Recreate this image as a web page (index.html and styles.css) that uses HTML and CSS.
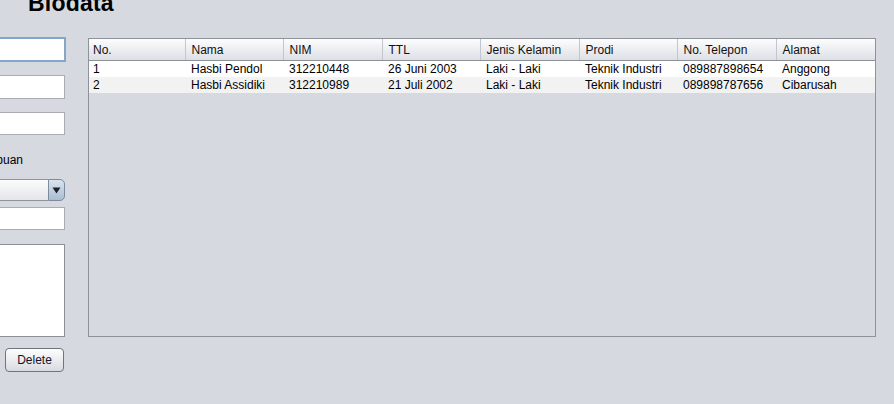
FILE: index.html
```html
<!DOCTYPE html>
<html>
<head>
<meta charset="utf-8">
<link rel="stylesheet" href="styles.css">
</head>
<body>
<h1 class="title">Biodata</h1>
<div class="app">
  <div class="form">
    <div class="field focused"></div>
    <div class="field f2"></div>
    <div class="field f3"></div>
    <div class="radio-label">Perempuan</div>
    <div class="combo"><div class="combo-main"></div><div class="combo-btn"><svg width="9" height="7" viewBox="0 0 9 7"><path d="M0.5 0.5 L8.5 0.5 L4.5 6.5 Z" fill="#1d2129"/></svg></div></div>
    <div class="field f4"></div>
    <div class="textarea"></div>
    <div class="btn-row"><button class="btn">Delete</button></div>
  </div>
  <div class="table-pane">
    <table class="grid">
      <colgroup>
        <col class="c1"><col class="c2"><col class="c3"><col class="c4"><col class="c5"><col class="c6"><col class="c7"><col class="c8">
      </colgroup>
      <thead>
        <tr><th>No.</th><th>Nama</th><th>NIM</th><th>TTL</th><th>Jenis Kelamin</th><th>Prodi</th><th>No. Telepon</th><th>Alamat</th></tr>
      </thead>
      <tbody>
        <tr><td>1</td><td>Hasbi Pendol</td><td>312210448</td><td>26 Juni 2003</td><td>Laki - Laki</td><td>Teknik Industri</td><td>089887898654</td><td>Anggong</td></tr>
        <tr class="alt"><td>2</td><td>Hasbi Assidiki</td><td>312210989</td><td>21 Juli 2002</td><td>Laki - Laki</td><td>Teknik Industri</td><td>089898787656</td><td>Cibarusah</td></tr>
      </tbody>
    </table>
  </div>
</div>
</body>
</html>
```
FILE: styles.css
```css
html, body {
  margin: 0;
  padding: 0;
  background: #d6d9df;
  overflow: hidden;
  width: 894px;
  height: 404px;
  font-family: "Liberation Sans", Arial, sans-serif;
  color: #000;
}
.title {
  margin: -10px 0 0 28px;
  height: 26px;
  font-size: 23px;
  line-height: 26px;
  font-weight: bold;
  letter-spacing: 0.2px;
}
.app {
  display: grid;
  grid-template-columns: 66px 788px;
  column-gap: 22px;
  margin-top: 21px;
}
.form {
  display: flex;
  flex-direction: column;
}
.field {
  background: #fff;
  border: 1px solid #a9acb2;
  border-left: none;
  height: 22px;
  margin-right: 1px;
}
.field.focused {
  height: 21px;
  border: 2px solid #84a6c9;
  border-left: none;
  margin-right: 0;
}
.f2 { margin-top: 13px; }
.f3 { margin-top: 13px; height: 21px; }
.radio-label {
  margin-top: 18px;
  margin-left: -39px;
  font-size: 12px;
  line-height: 14px;
  height: 14px;
}
.combo {
  margin-top: 12px;
  height: 22px;
  display: flex;
  margin-right: 1px;
}
.combo-main {
  flex: 1;
  border: 1px solid #8f949c;
  border-left: none;
  border-right: none;
  background: linear-gradient(#fbfbfc, #e3e6ea);
}
.combo-btn {
  width: 15px;
  border: 1px solid #7d8b9e;
  border-radius: 0 5px 5px 0;
  background: linear-gradient(#d9e3ee, #a9bdd3);
  display: flex;
  align-items: center;
  justify-content: center;
}
.f4 { margin-top: 6px; height: 21px; }
.textarea {
  margin-top: 14px;
  height: 91px;
  background: #fff;
  border: 1px solid #8c9096;
  border-left: none;
  margin-right: 1px;
}
.btn-row {
  margin-top: 11px;
  display: flex;
  padding-left: 5px;
}
.btn {
  width: 59px;
  height: 24px;
  border: 1px solid #70747b;
  border-radius: 4px;
  background: linear-gradient(#fdfdfd, #e9ebee 55%, #d7dae0);
  font-family: "Liberation Sans", Arial, sans-serif;
  font-size: 12px;
  color: #141432;
  padding: 0;
}
.table-pane {
  margin-top: 1px;
  height: 297px;
  border: 1px solid #8e9299;
  box-sizing: content-box;
  width: 786px;
}
.grid {
  border-collapse: collapse;
  table-layout: fixed;
  width: 786px;
  font-size: 12px;
}
.c1 { width: 96px; }
.c2 { width: 98px; }
.c3 { width: 99px; }
.c4 { width: 98px; }
.c5 { width: 99px; }
.c6 { width: 98px; }
.c7 { width: 99px; }
.c8 { width: 99px; }
.grid th {
  height: 21px;
  padding: 0 0 0 6px;
  text-align: left;
  font-weight: normal;
  background: linear-gradient(#fdfdfd, #eceef1 50%, #dcdfe4);
  border-right: 1px solid #c3c6cc;
  border-bottom: 1px solid #8d9198;
  color: #111;
  white-space: nowrap;
  overflow: hidden;
}
.grid th:last-child { border-right: none; }
.grid td {
  height: 16px;
  padding: 0 0 0 6px;
  background: #fff;
  white-space: nowrap;
  overflow: hidden;
  line-height: 16px;
}
.grid th:first-child, .grid td:first-child { padding-left: 4px; }
.grid tr.alt td { background: #f2f2f2; }
```
